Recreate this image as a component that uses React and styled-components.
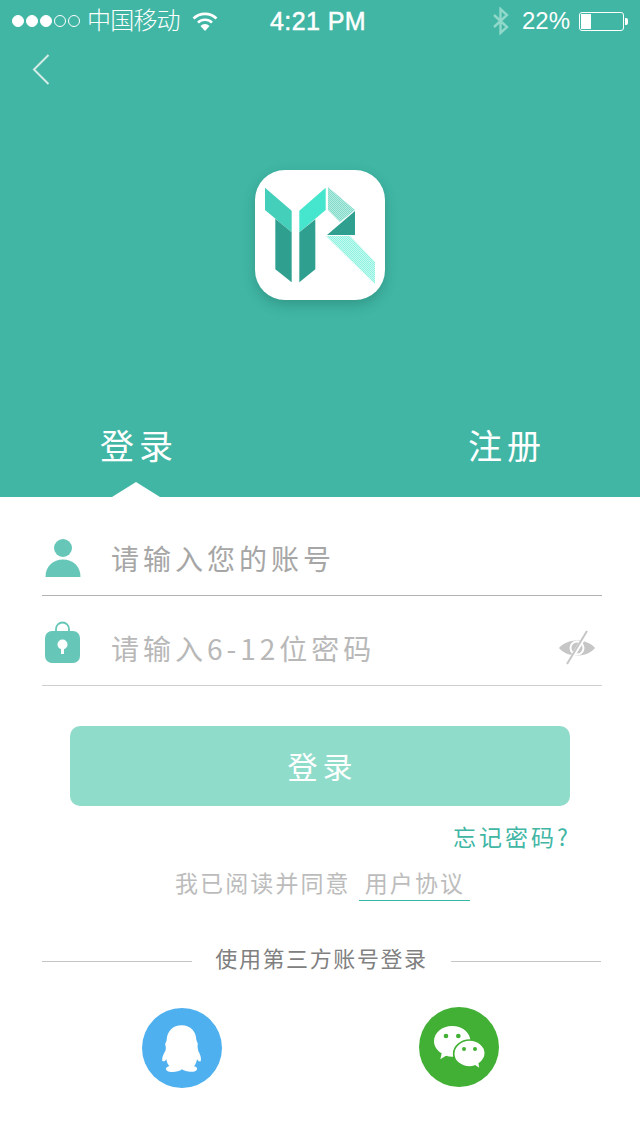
import React from "react";
import styled, { createGlobalStyle } from "styled-components";

const CJK = `"Noto Sans CJK SC", "Liberation Sans", sans-serif`;
const TEAL = "#41b6a4";

const Global = createGlobalStyle`
  html, body { margin: 0; padding: 0; background: #fff; }
  * { box-sizing: border-box; }
  body { font-family: ${CJK}; }
`;

const Page = styled.div`
  width: 640px;
  height: 1136px;
  overflow: hidden;
  background: #fff;
`;

const Header = styled.header`
  height: 497px;
  background: ${TEAL};
  display: flex;
  flex-direction: column;
`;

const StatusBar = styled.div`
  height: 42px;
  padding: 0 12px 0 12px;
  display: grid;
  grid-template-columns: 1fr auto 1fr;
  align-items: center;
  color: #fff;
`;

const StatusSide = styled.div`
  display: flex;
  align-items: center;
  justify-content: ${(p) => (p.$end ? "flex-end" : "flex-start")};
`;

const Dots = styled.div`
  display: flex;
  gap: 2px;
  margin-right: 8px;
`;

const Dot = styled.span`
  width: 12px;
  height: 12px;
  border-radius: 50%;
  border: 1px solid #fff;
  background: ${(p) => (p.$on ? "#fff" : "transparent")};
`;

const Carrier = styled.span`
  font-size: 24px;
  line-height: 38px;
  height: 42px;
  font-weight: 300;
  letter-spacing: -0.8px;
  margin: 0 12px 0 -1px;
`;

const Time = styled.span`
  font-family: "Liberation Sans", sans-serif;
  font-size: 25px;
  letter-spacing: 0.4px;
  -webkit-text-stroke: 0.5px #fff;
  margin-right: 4px;
`;

const Percent = styled.span`
  font-family: "Liberation Sans", sans-serif;
  font-size: 24px;
  margin: 0 9px 0 12px;
`;

const BatteryBody = styled.div`
  width: 45px;
  height: 19px;
  border: 1px solid #fff;
  border-radius: 3px;
  padding: 1px;
  display: flex;
`;

const BatteryFill = styled.div`
  width: 10px;
  background: #fff;
`;

const BatteryNub = styled.div`
  width: 3px;
  height: 7px;
  margin-left: 1px;
  background: #fff;
  border-radius: 0 2px 2px 0;
`;

const BackButton = styled.div`
  margin: 12px 0 0 32px;
  height: 32px;
  line-height: 0;
`;

const LogoTile = styled.div`
  width: 130px;
  height: 130px;
  margin: 84px auto 0;
  background: #fff;
  border-radius: 30px;
  box-shadow: 0 5px 12px rgba(20, 90, 80, 0.3);
  line-height: 0;
`;

const Tabs = styled.div`
  margin-top: auto;
  height: 78px;
  padding: 0 94px 0 100px;
  display: flex;
  justify-content: space-between;
`;

const Tab = styled.div`
  position: relative;
  height: 78px;
  font-size: 34px;
  line-height: 52px;
  font-weight: 400;
  letter-spacing: 5px;
  color: #fff;

  ${(p) =>
    p.$active &&
    `&::after {
      content: "";
      position: absolute;
      left: 12px;
      bottom: 0;
      width: 0;
      height: 0;
      border-left: 24px solid transparent;
      border-right: 24px solid transparent;
      border-bottom: 15px solid #fff;
    }`}
`;

const Form = styled.form`
  margin: 9px 38px 0 42px;
`;

const Field = styled.div`
  height: 90px;
  padding-top: 14px;
  border-bottom: 1px solid ${(p) => p.$line};
  display: flex;
  align-items: center;
`;

const FieldIcon = styled.div`
  width: 70px;
  padding-left: 3px;
  line-height: 0;
  margin-bottom: ${(p) => p.$raise || 0}px;
`;

const Placeholder = styled.span`
  flex: 1;
  font-size: 28px;
  font-weight: 400;
  letter-spacing: 4px;
  margin-left: -1px;
  color: ${(p) => p.$color};
`;

const EyeWrap = styled.div`
  margin-right: 7px;
  line-height: 0;
`;

const SubmitButton = styled.button`
  display: block;
  width: 500px;
  height: 80px;
  margin: 40px 0 0 70px;
  padding: 0 0 2px 5px;
  border: 0;
  border-radius: 10px;
  background: #90dccb;
  color: #fff;
  font-family: ${CJK};
  font-size: 30px;
  font-weight: 400;
  letter-spacing: 5px;
`;

const Forgot = styled.div`
  margin: 15px 69px 0 0;
  text-align: right;
  font-size: 23px;
  line-height: 30px;
  font-weight: 400;
  letter-spacing: 3px;
  color: #41b6a4;
`;

const Agreement = styled.div`
  margin: 15px 0 0 175px;
  display: flex;
  align-items: flex-start;
  font-size: 23px;
  line-height: 32px;
  font-weight: 400;
  letter-spacing: 2.1px;
  color: #bcbcbc;
`;

const AgreementLink = styled.span`
  margin-left: 8px;
  padding: 0 5px 0 6px;
  height: 35px;
  border-bottom: 1px solid #35b8a2;
`;

const Divider = styled.div`
  margin: 39px 39px 0 42px;
  display: flex;
  align-items: center;
  justify-content: space-between;
  font-size: 22px;
  line-height: 34px;
  font-weight: 400;
  letter-spacing: 1.6px;
  color: #808080;
`;

const DividerLine = styled.span`
  width: 150px;
  height: 1px;
  margin-top: 8px;
  background: #c4c4c4;
`;

const Socials = styled.div`
  margin: 34px 0 0 142px;
  display: flex;
  align-items: flex-start;
  gap: 197px;
`;

const SocialCircle = styled.div`
  width: 80px;
  height: 80px;
  margin-top: ${(p) => p.$shift || 0}px;
  line-height: 0;
`;

function BackIcon() {
  return (
    <svg width="18" height="32" viewBox="0 0 18 32">
      <path d="M16.5 1 L2 15.5 L16.5 30" fill="none" stroke="#d5ebe6" strokeWidth="2" />
    </svg>
  );
}

function WifiIcon() {
  return (
    <svg width="26" height="20" viewBox="0 0 26 20">
      <path d="M1.5 7.5 A16.5 16.5 0 0 1 24.5 7.5" fill="none" stroke="#fff" strokeWidth="2.6" />
      <path d="M6 11.6 A10 10 0 0 1 20 11.6" fill="none" stroke="#fff" strokeWidth="2.6" />
      <path d="M8.5 15 A6 6 0 0 1 17.5 15 L13 20 Z" fill="#fff" />
    </svg>
  );
}

function BluetoothIcon() {
  return (
    <svg width="18" height="28" viewBox="0 0 18 28">
      <path
        d="M2 8 L15 20 L8.5 26 L8.5 2 L15 8 L2 20"
        fill="none"
        stroke="#8fd8ca"
        strokeWidth="2.4"
      />
    </svg>
  );
}

function LogoMark() {
  return (
    <svg width="130" height="130" viewBox="45 30 390 390">
      <defs>
        <pattern id="hatchTop" width="6" height="6" patternUnits="userSpaceOnUse">
          <rect width="6" height="6" fill="#b4ebe0" />
          <rect width="3" height="3" fill="#86dccb" shapeRendering="crispEdges" />
          <rect x="3" y="3" width="3" height="3" fill="#86dccb" shapeRendering="crispEdges" />
        </pattern>
        <pattern id="hatchLow" width="6" height="6" patternUnits="userSpaceOnUse">
          <rect width="6" height="6" fill="#c4f9f0" />
          <rect width="3" height="3" fill="#90f2e1" shapeRendering="crispEdges" />
          <rect x="3" y="3" width="3" height="3" fill="#90f2e1" shapeRendering="crispEdges" />
        </pattern>
      </defs>
      <polygon points="75,83 155,152 155,217 75,150" fill="#43cfb9" />
      <polygon points="106,176 155,217 155,367 106,328" fill="#2f9f8f" />
      <polygon points="257,83 178,152 178,217 257,150" fill="#45e6cd" />
      <polygon points="178,217 226,178 226,328 178,367" fill="#2f9f8f" />
      <polygon points="264,81 345,150 300,186 264,150" fill="url(#hatchTop)" />
      <polygon points="345,153 345,225 261,225" fill="#2f9f8f" />
      <polygon points="258,228 330,228 405,306 405,372" fill="url(#hatchLow)" />
    </svg>
  );
}

function UserIcon() {
  return (
    <svg width="36" height="38" viewBox="0 0 36 38" fill="#66c7b8">
      <circle cx="18" cy="9" r="9" />
      <path d="M0.5 38 C0.5 27 8 20.5 18 20.5 C28 20.5 35.5 27 35.5 38 Z" />
    </svg>
  );
}

function LockIcon() {
  return (
    <svg width="35" height="42" viewBox="0 0 35 42">
      <path d="M11 11 V8 A6.5 6.5 0 0 1 24 8 V11" fill="none" stroke="#66c7b8" strokeWidth="1.8" />
      <rect y="10" width="35" height="32" rx="7" fill="#66c7b8" />
      <circle cx="17.5" cy="23.5" r="5" fill="#fff" />
      <rect x="16" y="25" width="3" height="8" fill="#fff" />
    </svg>
  );
}

function EyeOffIcon() {
  return (
    <svg width="36" height="36" viewBox="0 0 36 36">
      <path d="M0 18 C8 8 28 8 36 18 C28 28 8 28 0 18 Z" fill="#c6c6c6" />
      <circle cx="18" cy="18" r="6.5" fill="none" stroke="#fff" strokeWidth="2" />
      <path d="M29 1 L9 34" stroke="#fff" strokeWidth="4" />
      <path d="M28 1 L8 34" stroke="#c6c6c6" strokeWidth="2" />
    </svg>
  );
}

function QQIcon() {
  return (
    <svg width="80" height="80" viewBox="36 23 240 240">
      <circle cx="156" cy="143" r="120" fill="#4eb0ee" />
      <path
        fill="#fff"
        d="M155 75 C183 75 198 95 199 118 C200 124 205 128 203 135 C202 140 204 146 205 152 C210 162 215 172 212 183 C208 185 203 181 201 176 C200 185 197 192 192 198 C202 200 204 207 198 211 C188 217 165 215 156 207 C147 215 122 218 112 212 C104 206 108 200 118 197 C113 191 110 185 109 176 C107 181 101 185 97 182 C95 172 101 160 106 152 C108 146 108 140 106 135 C104 128 110 124 110 118 C112 93 128 75 155 75 Z"
      />
    </svg>
  );
}

function WeChatIcon() {
  return (
    <svg width="80" height="80" viewBox="867 21 240 240">
      <circle cx="987" cy="141" r="120" fill="#41b035" />
      <path
        fill="#fff"
        d="M966 78 C1000 78 1022 100 1022 128 C1022 150 995 170 966 170 C960 170 954 169 948 167 L931 178 L935 160 C921 152 912 139 912 124 C912 98 936 78 966 78 Z"
      />
      <path
        fill="#fff"
        stroke="#41b035"
        strokeWidth="5"
        d="M1019 120 C1044 120 1066 138 1066 160 C1066 173 1059 183 1048 191 L1051 208 L1035 198 C1029 200 1024 201 1019 201 C993 201 971 184 971 161 C971 139 993 120 1019 120 Z"
      />
      <g fill="#41b035">
        <circle cx="948" cy="108" r="7" />
        <circle cx="985" cy="108" r="7" />
        <circle cx="1002" cy="147" r="6" />
        <circle cx="1035" cy="147" r="6" />
      </g>
    </svg>
  );
}

export default function App() {
  return (
    <Page>
      <Global />
      <Header>
        <StatusBar>
          <StatusSide>
            <Dots>
              <Dot $on />
              <Dot $on />
              <Dot $on />
              <Dot />
              <Dot />
            </Dots>
            <Carrier>中国移动</Carrier>
            <WifiIcon />
          </StatusSide>
          <Time>4:21 PM</Time>
          <StatusSide $end>
            <BluetoothIcon />
            <Percent>22%</Percent>
            <BatteryBody>
              <BatteryFill />
            </BatteryBody>
            <BatteryNub />
          </StatusSide>
        </StatusBar>
        <BackButton>
          <BackIcon />
        </BackButton>
        <LogoTile>
          <LogoMark />
        </LogoTile>
        <Tabs>
          <Tab $active>登录</Tab>
          <Tab>注册</Tab>
        </Tabs>
      </Header>
      <Form>
        <Field $line="#b4b4b4">
          <FieldIcon>
            <UserIcon />
          </FieldIcon>
          <Placeholder $color="#a6a6a6">请输入您的账号</Placeholder>
        </Field>
        <Field $line="#cfcfcf">
          <FieldIcon $raise={12}>
            <LockIcon />
          </FieldIcon>
          <Placeholder $color="#b8b8b8">请输入6-12位密码</Placeholder>
          <EyeWrap>
            <EyeOffIcon />
          </EyeWrap>
        </Field>
      </Form>
      <SubmitButton type="button">登录</SubmitButton>
      <Forgot>忘记密码?</Forgot>
      <Agreement>
        我已阅读并同意
        <AgreementLink>用户协议</AgreementLink>
      </Agreement>
      <Divider>
        <DividerLine />
        使用第三方账号登录
        <DividerLine />
      </Divider>
      <Socials>
        <SocialCircle>
          <QQIcon />
        </SocialCircle>
        <SocialCircle $shift={-1}>
          <WeChatIcon />
        </SocialCircle>
      </Socials>
    </Page>
  );
}
